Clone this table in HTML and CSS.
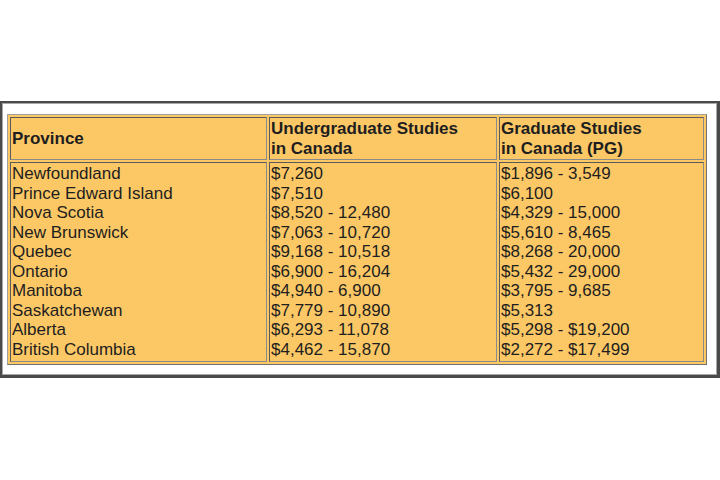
FILE: index.html
```html
<!DOCTYPE html>
<html>
<head>
<meta charset="utf-8">
<link rel="stylesheet" href="styles.css">
</head>
<body>
<div class="frame">
  <table class="fees">
    <colgroup>
      <col class="c1">
      <col class="c2">
      <col class="c3">
    </colgroup>
    <tr class="head">
      <th>Province</th>
      <th>Undergraduate Studies<br>in Canada</th>
      <th>Graduate Studies<br>in Canada (PG)</th>
    </tr>
    <tr class="body">
      <td>Newfoundland<br>Prince Edward Island<br>Nova Scotia<br>New Brunswick<br>Quebec<br>Ontario<br>Manitoba<br>Saskatchewan<br>Alberta<br>British Columbia</td>
      <td>$7,260<br>$7,510<br>$8,520 - 12,480<br>$7,063 - 10,720<br>$9,168 - 10,518<br>$6,900 - 16,204<br>$4,940 - 6,900<br>$7,779 - 10,890<br>$6,293 - 11,078<br>$4,462 - 15,870</td>
      <td>$1,896 - 3,549<br>$6,100<br>$4,329 - 15,000<br>$5,610 - 8,465<br>$8,268 - 20,000<br>$5,432 - 29,000<br>$3,795 - 9,685<br>$5,313<br>$5,298 - $19,200<br>$2,272 - $17,499</td>
    </tr>
  </table>
</div>
</body>
</html>
```
FILE: styles.css
```css
html, body {
  margin: 0;
  padding: 0;
  background: #ffffff;
}
body {
  width: 720px;
  height: 480px;
  padding-top: 101px;
  box-sizing: border-box;
}
.frame {
  width: 720px;
  height: 277px;
  box-sizing: border-box;
  border: 2px solid #4a4a4a;
  border-right-width: 3px;
  border-bottom-width: 3px;
  box-shadow: inset 1px 1px 0 #a8a8a8, inset -1px -1px 0 #a8a8a8;
  padding: 11px 5px 0 5px;
}
.fees {
  width: 699px;
  table-layout: fixed;
  border-collapse: separate;
  border-spacing: 2px;
  border: 1px solid;
  border-color: #a0a0a0 #707070 #707070 #a0a0a0;
  background: #fcc866;
  font-family: "Liberation Sans", Arial, sans-serif;
  font-size: 17px;
  line-height: 19.55px;
  color: #1e1e1e;
}
.c1 { width: 257px; }
.c2 { width: 228px; }
.c3 { width: 205px; }
.fees th, .fees td {
  border: 1px solid;
  border-color: #5a5a5a #8a8a8a #8a8a8a #5a5a5a;
  padding: 1px;
  text-align: left;
}
.fees th {
  font-weight: bold;
  vertical-align: middle;
}
.fees td {
  vertical-align: top;
}
```
